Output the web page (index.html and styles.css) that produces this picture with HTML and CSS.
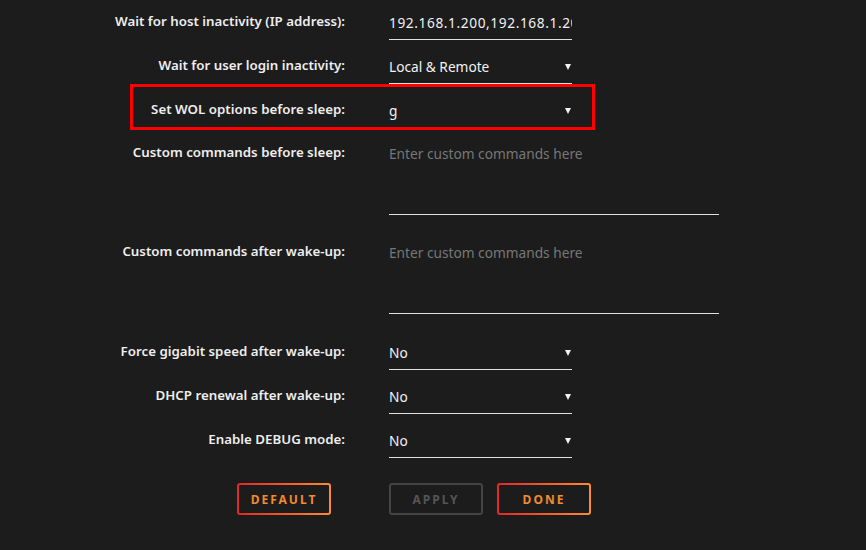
FILE: index.html
```html
<!DOCTYPE html>
<html lang="en">
<head>
    <meta charset="UTF-8">
    <meta name="viewport" content="width=device-width, initial-scale=1.0">
    <title>Sleep Settings</title>
    <link rel="stylesheet" href="styles.css">
</head>
<body>

    <form class="settings">
        <div class="row">
            <label class="label">Wait for host inactivity (IP address):</label>
            <div class="field text">
                <span class="value">192.168.1.200,192.168.1.201</span>
            </div>
        </div>

        <div class="row">
            <label class="label">Wait for user login inactivity:</label>
            <div class="field select">
                <span class="value">Local &amp; Remote</span>
                <span class="arrow"></span>
            </div>
        </div>

        <div class="row highlighted">
            <label class="label">Set WOL options before sleep:</label>
            <div class="field select">
                <span class="value">g</span>
                <span class="arrow"></span>
            </div>
            <div class="highlight-box"></div>
        </div>

        <div class="row row-area">
            <label class="label">Custom commands before sleep:</label>
            <div class="field area">
                <span class="placeholder">Enter custom commands here</span>
            </div>
        </div>

        <div class="row row-area">
            <label class="label">Custom commands after wake-up:</label>
            <div class="field area">
                <span class="placeholder">Enter custom commands here</span>
            </div>
        </div>

        <div class="row">
            <label class="label">Force gigabit speed after wake-up:</label>
            <div class="field select">
                <span class="value">No</span>
                <span class="arrow"></span>
            </div>
        </div>

        <div class="row">
            <label class="label">DHCP renewal after wake-up:</label>
            <div class="field select">
                <span class="value">No</span>
                <span class="arrow"></span>
            </div>
        </div>

        <div class="row">
            <label class="label">Enable DEBUG mode:</label>
            <div class="field select">
                <span class="value">No</span>
                <span class="arrow"></span>
            </div>
        </div>

        <div class="row buttons">
            <div class="label">
                <button type="button" class="btn">Default</button>
            </div>
            <div class="actions">
                <button type="button" class="btn" disabled>Apply</button>
                <button type="button" class="btn">Done</button>
            </div>
        </div>
    </form>

</body>
</html>
```

FILE: styles.css
```css
body {
    font-family: 'Noto Sans', 'Open Sans', sans-serif;
    font-size: 13.7px;
    background-color: #1c1c1c;
    color: #f2f2f2;
    margin: 0;
    padding: 0;
}

.settings {
    display: flex;
    flex-direction: column;
}

.row {
    position: relative;
    display: flex;
    align-items: flex-start;
    gap: 44px;
    margin-bottom: 4px;
}

.label {
    width: 345px;
    flex-shrink: 0;
    text-align: right;
    font-size: 13.3px;
    line-height: 20px;
    padding-top: 11px;
    font-weight: 600;
    color: #eee;
}

.field {
    box-sizing: border-box;
    height: 40px;
    padding: 13px 0 6px;
    line-height: 20px;
    border-bottom: 1px solid #e0e0e0;
    overflow: hidden;
    white-space: nowrap;
}

.text,
.select {
    width: 183px;
}

/* the ip list is wider than the box, it gets cut at the edge */
.text .value {
    letter-spacing: 0.6px;
}

.select {
    display: flex;
    justify-content: space-between;
    align-items: center;
}

.arrow {
    flex-shrink: 0;
    width: 0;
    height: 0;
    margin-right: 1px;
    border-left: 3px solid transparent;
    border-right: 3px solid transparent;
    border-top: 6px solid #f2f2f2;
}

/* multi-line command fields */
.row-area {
    margin-bottom: 16px;
}

.row-area .label {
    padding-top: 10px;
}

.area {
    width: 330px;
    height: 83px;
    padding-top: 12px;
}

.placeholder {
    color: #777;
}

.highlight-box {
    position: absolute;
    left: 130px;
    top: -4px;
    width: 465px;
    height: 46px;
    box-sizing: border-box;
    border: 3px solid #f00;
    pointer-events: none;
}

/* buttons */
.buttons {
    margin-top: 21px;
}

.buttons .label {
    padding: 0 14px 0 0;
    box-sizing: border-box;
}

.actions {
    display: flex;
    gap: 14px;
}

.btn {
    width: 94px;
    height: 32px;
    font-family: inherit;
    font-size: 12px;
    font-weight: 700;
    letter-spacing: 2px;
    text-transform: uppercase;
    color: #f28a2e;
    border: 2px solid transparent;
    border-radius: 3px;
    background: linear-gradient(#1c1c1c, #1c1c1c) padding-box,
                linear-gradient(90deg, #e22828, #ff8c2f) border-box;
    cursor: pointer;
}

.btn:disabled {
    color: #555;
    background: #1c1c1c;
    border-color: #444;
    cursor: default;
}
```
